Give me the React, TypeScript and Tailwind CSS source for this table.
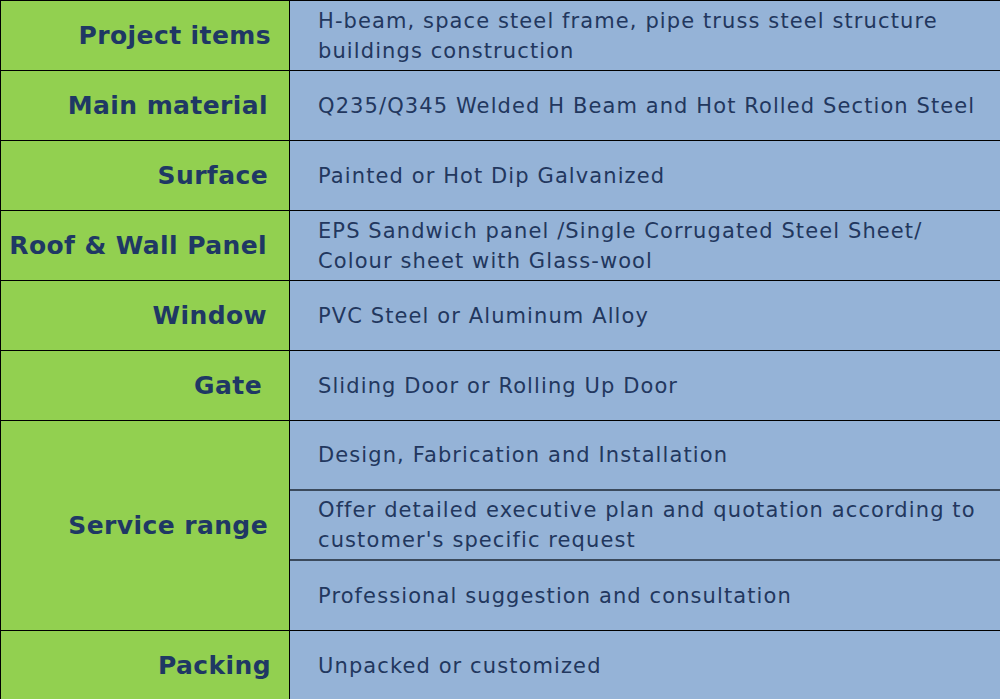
import React from "react";

function Label({ children, pr }: { children: React.ReactNode; pr: string }) {
  return (
    <div
      className={`w-[289px] shrink-0 bg-[#92d050] border-r border-black flex items-center justify-end font-bold text-[25px] tracking-[0.4px] whitespace-nowrap text-[#1f3864] ${pr}`}
    >
      {children}
    </div>
  );
}

function Value({ children }: { children: React.ReactNode }) {
  return (
    <div className="flex-1 bg-[#95b3d7] flex items-center pl-[28px] pr-1 text-[21px] tracking-[1.1px] leading-[30px] text-[#22375e]">
      <span>{children}</span>
    </div>
  );
}

const rows: [string, string, string][] = [
  ["Project items", "H-beam, space steel frame, pipe truss steel structure buildings construction", "pr-[18px]"],
  ["Main material", "Q235/Q345 Welded H Beam and Hot Rolled Section Steel", "pr-[21px]"],
  ["Surface", "Painted or Hot Dip Galvanized", "pr-[21px]"],
  ["Roof & Wall Panel", "EPS Sandwich panel /Single Corrugated Steel Sheet/ Colour sheet with Glass-wool", "pr-[22px]"],
  ["Window", "PVC Steel or Aluminum Alloy", "pr-[22px]"],
  ["Gate", "Sliding Door or Rolling Up Door", "pr-[27px]"],
];

export default function App() {
  return (
    <div
      className="w-[1000px] h-[699px] overflow-hidden bg-[#95b3d7] border-t border-l border-black"
      style={{ fontFamily: '"DejaVu Sans", Verdana, sans-serif' }}
    >
      {rows.map(([l, v, pr]) => (
        <div key={l} className="flex h-[70px] border-b border-black">
          <Label pr={pr}>{l}</Label>
          <Value>{v}</Value>
        </div>
      ))}
      <div className="flex h-[210px] border-b border-black">
        <Label pr="pr-[21px]">Service range</Label>
        <div className="flex-1 flex flex-col">
          <div className="h-[70px] border-b-2 border-[#3b4a5c] flex">
            <Value>Design, Fabrication and Installation</Value>
          </div>
          <div className="h-[70px] border-b-2 border-[#3b4a5c] flex">
            <Value>Offer detailed executive plan and quotation according to customer's specific request</Value>
          </div>
          <div className="flex-1 flex">
            <Value>Professional suggestion and consultation</Value>
          </div>
        </div>
      </div>
      <div className="flex h-[70px]">
        <Label pr="pr-[18px]">Packing</Label>
        <Value>Unpacked or customized</Value>
      </div>
    </div>
  );
}
